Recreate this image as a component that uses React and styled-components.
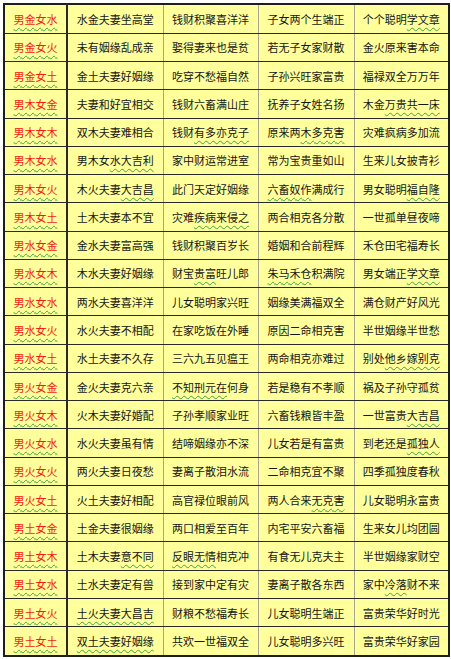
import React from "react";
import styled, { createGlobalStyle } from "styled-components";

const GlobalStyle = createGlobalStyle`
  html, body {
    margin: 0;
    padding: 0;
    background: #ffffff;
  }
  body {
    font-family: "Noto Sans CJK SC", "Noto Sans", sans-serif;
  }
`;

const Page = styled.div`
  padding: 3px 0 0 3px;
`;

const Table = styled.table`
  width: 445px;
  height: 654px;
  border-collapse: collapse;
  table-layout: fixed;
  border: 2px solid #1e1e1e;
  background: #ffff9c;
`;

const Col = styled.col`
  width: ${(p) => p.$w}px;
`;

const Cell = styled.td`
  padding: 0;
  text-align: center;
  vertical-align: middle;
  font-size: 11px;
  line-height: 14px;
  white-space: nowrap;
  color: #161616;
  border-top: 1px solid #2a2a2a;
  border-bottom: 1px solid #2a2a2a;
  border-left: 1px solid #a8a592;

  &:first-child {
    color: #f41a0c;
    border-left: 2px solid #1e1e1e;
  }

  &:nth-child(2) {
    border-left: 2px solid #2a2a2a;
  }
`;

const Squiggle = styled.span`
  text-decoration: underline wavy #3aa53a;
  text-decoration-thickness: 1px;
  text-underline-offset: 3px;
`;

const widths = [63, 96, 95, 96, 95];

const rows = [
  ["[男金女水]", "水金夫妻坐高堂", "钱财积聚喜洋洋", "子女两个生端正", "个个聪明[学文章]"],
  ["[男金女火]", "未有姻缘乱成亲", "娶得妻来也是贫", "若无子女家财散", "金火原来害本命"],
  ["[男金女土]", "金土夫妻好姻缘", "吃穿不愁福自然", "子孙兴旺家富贵", "福禄双全万万年"],
  ["[男木女金]", "夫妻和好宜相交", "钱财六畜满山庄", "抚养子女姓名扬", "木金[万贵共一床]"],
  ["[男木女木]", "双木夫妻难相合", "钱财[有多亦克子]", "原来两[木多克害]", "灾难疯病多加流"],
  ["[男木女水]", "男木女[水大吉利]", "家中财运常进室", "常为宝贵重如山", "生来儿女披青衫"],
  ["[男木女火]", "木火夫妻[大吉昌]", "此门天定好姻缘", "[六畜奴作]满成行", "男女聪明[福自隆]"],
  ["[男木女土]", "土木夫妻本不宜", "灾难[疾病来侵之]", "两合相克各分散", "一世孤单昼夜啼"],
  ["[男水女金]", "金水夫妻富高强", "钱财积聚百岁长", "婚姻和合前程辉", "禾仓田宅福寿长"],
  ["[男水女木]", "木水夫妻好姻缘", "财宝[贵富]旺儿郎", "[朱马禾仓]积满院", "男女端正[学文章]"],
  ["[男水女水]", "两水夫妻喜洋洋", "儿女聪明家兴旺", "姻缘美满福双全", "满仓财产好风光"],
  ["[男水女火]", "水火夫妻不相配", "在家吃饭在外睡", "原因二命相克害", "半世姻缘半世愁"],
  ["[男水女土]", "水土夫妻不久存", "三六九五见瘟王", "两命相克亦难过", "别处[他乡嫁别克]"],
  ["[男火女金]", "金火夫妻克六亲", "[不知刑元在]何身", "若是稳有不孝顺", "祸及子孙守孤贫"],
  ["[男火女木]", "火木夫妻好婚配", "子孙孝顺家业旺", "六畜钱粮皆丰盈", "一世富贵[大吉昌]"],
  ["[男火女水]", "水火夫妻虽有情", "结啼姻缘亦不深", "儿女若是有富贵", "到老还是[孤独人]"],
  ["[男火女火]", "两火夫妻日夜愁", "妻离子散泪水流", "二命相克宜不聚", "四季孤独度春秋"],
  ["[男火女土]", "火土夫妻好相配", "高官禄位眼前风", "两人合来[无克害]", "儿女聪明永富贵"],
  ["[男土女金]", "土金夫妻很姻缘", "两口相爱至百年", "内宅平安六畜福", "生来女儿均团圆"],
  ["[男土女木]", "土木夫妻[意不同]", "[反眼无情]相克冲", "有食无儿克夫主", "半世姻缘家财空"],
  ["[男土女水]", "土水夫妻定有兽", "接到家中定有灾", "妻离子散各东西", "家中[冷落]财不来"],
  ["[男土女火]", "[土火夫妻大昌吉]", "财粮不愁福寿长", "儿女聪明生端正", "富贵荣华好时光"],
  ["[男土女土]", "[双土夫妻好姻缘]", "共欢一世福双全", "儿女聪明多兴旺", "富贵荣华好家园"],
];

// "[...]" marks the part of a cell that carries the green wavy underline
const renderText = (text) =>
  text
    .split(/(\[[^\]]+\])/)
    .filter(Boolean)
    .map((part, i) =>
      part.startsWith("[") ? (
        <Squiggle key={i}>{part.slice(1, -1)}</Squiggle>
      ) : (
        <React.Fragment key={i}>{part}</React.Fragment>
      )
    );

const App = () => (
  <Page>
    <GlobalStyle />
    <Table>
      <colgroup>
        {widths.map((w, i) => (
          <Col key={i} $w={w} />
        ))}
      </colgroup>
      <tbody>
        {rows.map((row, r) => (
          <tr key={r}>
            {row.map((text, c) => (
              <Cell key={c}>{renderText(text)}</Cell>
            ))}
          </tr>
        ))}
      </tbody>
    </Table>
  </Page>
);

export default App;
